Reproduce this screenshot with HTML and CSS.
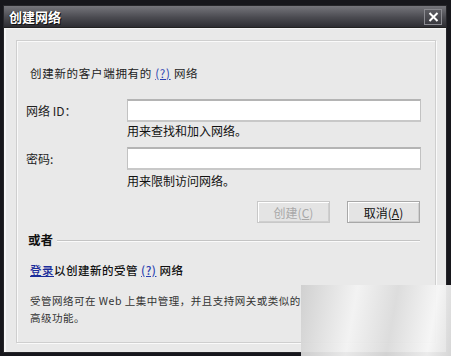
FILE: index.html
```html
<!DOCTYPE html>
<html lang="zh-CN">
<head>
	<meta charset="UTF-8">
	<title>创建网络</title>
	<link rel="stylesheet" href="styles.css">
</head>
<body>
	<div class="dialog">
		<div class="titlebar">
			<span class="title">创建网络</span>
			<a href="javascript:;" class="close">
				<svg width="11" height="10" viewBox="0 0 11 10"><path d="M1.5 1 L9.5 9 M9.5 1 L1.5 9" stroke="#fff" stroke-width="2"/></svg>
			</a>
		</div>
		<div class="client">
			<div class="panel">
				<p class="intro">创建新的客户端拥有的 <a href="#" class="help">(?)</a> 网络</p>

				<div class="field">
					<label class="label">网络 ID：</label>
					<input class="input" type="text">
				</div>
				<p class="hint hint1">用来查找和加入网络。</p>

				<div class="field field2">
					<label class="label">密码:</label>
					<input class="input" type="password">
				</div>
				<p class="hint hint2">用来限制访问网络。</p>

				<div class="buttons">
					<button class="btn" disabled>创建(<u>C</u>)</button>
					<button class="btn">取消(<u>A</u>)</button>
				</div>

				<div class="or">
					<span class="or-text">或者</span>
					<span class="or-line"></span>
				</div>

				<p class="login"><a href="#" class="link">登录</a>以创建新的受管 <a href="#" class="help">(?)</a> 网络</p>

				<p class="desc">受管网络可在 Web 上集中管理，并且支持网关或类似的<br>高级功能。</p>
			</div>
		</div>
		<div class="mark"></div>
	</div>
</body>
</html>
```

FILE: styles.css
```css
* {
	margin: 0;
	padding: 0;
	box-sizing: border-box;
}
body {
	background: #17171c;
	padding: 5px 0 0 3px;
	font-family: "Noto Sans CJK SC", "Liberation Sans", sans-serif;
	font-size: 12px;
	color: #1a1a1a;
	width: 451px;
	height: 356px;
	overflow: hidden;
}
.dialog {
	width: 444px;
	height: 348px;
	background: #3a3a3f;
	border: 1px solid #26262a;
	position: relative;
	display: flex;
	flex-direction: column;
}
.titlebar {
	height: 22px;
	display: flex;
	align-items: center;
	justify-content: space-between;
	padding: 0 4px 0 5px;
	background: linear-gradient(#76767c, #4a4a50 55%, #2e2e33);
	border-bottom: 1px solid #222;
}
.title {
	color: #fff;
	font-weight: bold;
	font-size: 13px;
	text-shadow: 1px 1px 0 #111, -1px 0 0 #333;
}
.close {
	width: 18px;
	height: 16px;
	display: flex;
	align-items: center;
	justify-content: center;
	background: linear-gradient(#5c5c62, #3a3a40);
	border: 1px solid #8a8a90;
}
.client {
	flex: 1;
	background: #e9e9e9;
	border-left: 2px solid #f6f6f6;
	border-top: 1px solid #f4f4f4;
	padding: 11px 10px 9px 10px;
}
.panel {
	height: 100%;
	border: 1px solid #cfcfcf;
	box-shadow: inset 1px 1px 0 #fafafa, 1px 1px 0 #fafafa;
	padding: 1px 11px 0 9px;
}
.intro {
	margin: 23px 0 0 4px;
	line-height: 16px;
	font-size: 11.5px;
	letter-spacing: 0.7px;
	color: #222;
}
.help {
	color: #2a3fb0;
	text-decoration: underline;
}
.field {
	display: flex;
	align-items: center;
	margin-top: 18px;
}
.field2 {
	margin-top: 8px;
}
.label {
	width: 101px;
	color: #222;
}
.input {
	width: 294px;
	height: 23px;
	background: #fff;
	border: 1px solid #c2c2c2;
	border-top: 2px solid #b4b4b4;
	border-bottom: 2px solid #c8c8c8;
	outline: none;
}
.hint {
	margin-left: 101px;
	line-height: 16px;
	color: #111;
}
.hint1 {
	margin-top: 1px;
}
.hint2 {
	margin-top: 3px;
}
.buttons {
	display: flex;
	justify-content: flex-end;
	gap: 17px;
	margin-top: 12px;
	padding-right: 4px;
}
.btn {
	width: 73px;
	height: 22px;
	font-family: inherit;
	font-size: 12px;
	color: #111;
	background: #e4e4e4;
	border: 1px solid #a8a8a8;
	box-shadow: inset 1px 1px 0 #fff, inset -1px -1px 0 #cfcfcf;
}
.btn:disabled {
	color: #a8a8a8;
	border-color: #c8c8c8;
}
.or {
	display: flex;
	align-items: center;
	margin: 9px 4px 0 2px;
	line-height: 16px;
}
.or-text {
	font-weight: bold;
	font-size: 12.5px;
	color: #111;
}
.or-line {
	flex: 1;
	height: 2px;
	margin: 2px 0 0 4px;
	border-top: 1px solid #c4c4c4;
	border-bottom: 1px solid #fafafa;
}
.login {
	margin: 14px 0 0 4px;
	line-height: 16px;
	font-size: 11.5px;
	letter-spacing: 0.5px;
	color: #111;
	font-weight: 500;
}
.link {
	color: #1a2c9a;
	text-decoration: underline;
}
.desc {
	margin: 14px 0 0 4px;
	line-height: 17px;
	font-size: 10.5px;
	letter-spacing: 0.5px;
	color: #333;
}
.mark {
	position: absolute;
	right: -5px;
	bottom: -5px;
	width: 150px;
	height: 72px;
	background: linear-gradient(100deg, #cfcfcf, #f3f3f3 35%, #dcdcdc 60%, #f6f6f6 85%, #e0e0e0);
	opacity: 0.95;
}
```
